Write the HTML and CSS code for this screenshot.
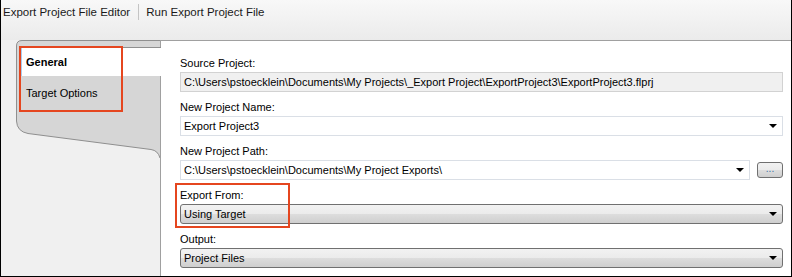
FILE: index.html
```html
<!DOCTYPE html>
<html lang="en">
<head>
    <meta charset="UTF-8">
    <title>Export Project File Editor</title>
    <link rel="stylesheet" href="styles.css">
</head>
<body>
    <div class="window">
        <div class="toolbar">
            <span class="tool">Export Project File Editor</span>
            <span class="sep"></span>
            <span class="tool">Run Export Project File</span>
        </div>
        <div class="main">
            <div class="tabs">
                <svg class="tab-shape" width="160" height="120" viewBox="0 0 160 120">
                    <path d="M15.5,6 Q15.5,0.5 21,0.5 L159,0.5 L159,118 Q157,110.5 150,109.5 L27,93.5 Q16,91.5 15.5,81 Z" fill="#d6d6d6"/>
                    <path d="M159,0.5 L21,0.5 Q15.5,0.5 15.5,6 L15.5,81 Q16,91.5 27,93.5 L150,109.5 Q157,110.5 159,118" fill="none" stroke="#8f8f8f"/>
                </svg>
                <div class="tab active">General</div>
                <div class="tab">Target Options</div>
                <div class="callout callout-tabs"></div>
            </div>
            <div class="content">
                <div class="group">
                    <div class="label">Source Project:</div>
                    <div class="field readonly">C:\Users\pstoecklein\Documents\My Projects\_Export Project\ExportProject3\ExportProject3.flprj</div>
                </div>
                <div class="group">
                    <div class="label">New Project Name:</div>
                    <div class="field editable">
                        <span>Export Project3</span>
                        <span class="arrow"></span>
                    </div>
                </div>
                <div class="group">
                    <div class="label">New Project Path:</div>
                    <div class="row">
                        <div class="field editable">
                            <span>C:\Users\pstoecklein\Documents\My Project Exports\</span>
                            <span class="arrow"></span>
                        </div>
                        <div class="browse">...</div>
                    </div>
                </div>
                <div class="group">
                    <div class="label">Export From:</div>
                    <div class="field combo">
                        <span>Using Target</span>
                        <span class="arrow"></span>
                    </div>
                </div>
                <div class="group">
                    <div class="label">Output:</div>
                    <div class="field combo">
                        <span>Project Files</span>
                        <span class="arrow"></span>
                    </div>
                </div>
                <div class="callout callout-export"></div>
            </div>
        </div>
    </div>
</body>
</html>
```

FILE: styles.css
```css
* {
    margin: 0;
    box-sizing: border-box;
}
body {
    font-family: "Liberation Sans", Arial, sans-serif;
    font-size: 11px;
    color: #000000;
    background-color: #FFFFFF;
}
.window {
    width: 792px;
    height: 277px;
    border: 1px solid #000000;
    border-top: none;
    display: flex;
    flex-direction: column;
    background-color: #F0F0F0;
}
.toolbar {
    height: 40px;
    padding: 5px 0 0 2px;
    display: flex;
    align-items: flex-start;
    background: linear-gradient(to bottom, #F8F8F8, #EBEBEB);
}
.tool {
    font-size: 11.5px;
    line-height: 14px;
    color: #1A1A1A;
}
.sep {
    width: 1px;
    height: 16px;
    margin: -1px 7px 0 8px;
    background-color: #C4C4C4;
}
.main {
    flex: 1;
    display: flex;
}
.tabs {
    width: 159px;
    position: relative;
}
.tab-shape {
    position: absolute;
    top: 0;
    left: 0;
}
.tab {
    position: relative;
    margin-left: 19px;
    padding-left: 6px;
    height: 34px;
    line-height: 34px;
}
.tab.active {
    margin-top: 7px;
    margin-right: -1px;
    height: 29px;
    line-height: 28px;
    padding-left: 5px;
    background-color: #FFFFFF;
    border-top: 1px solid #8F8F8F;
    border-left: 1px solid #8F8F8F;
    box-shadow: inset 1px 0 #A8CDEE;
    font-weight: bold;
    z-index: 1;
}
.content {
    flex: 1;
    position: relative;
    background-color: #FFFFFF;
    border-top: 1px solid #A0A0A0;
    border-left: 1px solid #A0A0A0;
    padding: 15px 8px 0 19px;
}
.group {
    margin-bottom: 8px;
}
.label {
    line-height: 14px;
    margin-bottom: 2px;
}
.field {
    height: 20px;
    padding: 0 5px 0 3px;
    display: flex;
    align-items: center;
    justify-content: space-between;
    white-space: nowrap;
}
.readonly {
    background-color: #F0F0F0;
    border: 1px solid #D2D2D2;
}
.editable {
    background-color: #FFFFFF;
    border: 1px solid #DADFE6;
}
.combo {
    border: 1px solid #707070;
    border-radius: 3px;
    background: linear-gradient(to bottom, #F2F2F2 0%, #EBEBEB 50%, #DDDDDD 50%, #CFCFCF 100%);
}
.arrow {
    width: 0;
    height: 0;
    border-left: 4px solid transparent;
    border-right: 4px solid transparent;
    border-top: 4px solid #000000;
}
.row {
    display: flex;
    align-items: center;
    gap: 7px;
}
.row .field {
    flex: 1;
}
.browse {
    width: 26px;
    height: 16px;
    border: 1px solid #707070;
    border-radius: 3px;
    background: linear-gradient(to bottom, #F2F2F2 0%, #EBEBEB 50%, #DDDDDD 50%, #CFCFCF 100%);
    font-size: 10px;
    line-height: 12px;
    text-align: center;
    color: #3A6EA5;
}
.callout {
    position: absolute;
    border: 2px solid #E5461F;
    z-index: 2;
}
.callout-tabs {
    left: 18px;
    top: 6px;
    width: 104px;
    height: 66px;
}
.callout-export {
    left: 14px;
    top: 142px;
    width: 115px;
    height: 45px;
}
```
